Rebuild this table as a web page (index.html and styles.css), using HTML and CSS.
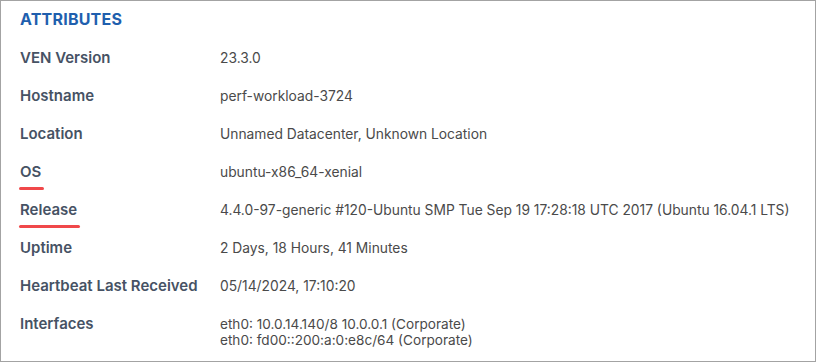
FILE: index.html
```html
<!DOCTYPE html>
<html lang="en">
<head>
    <meta charset="UTF-8" />
    <title>Workload Attributes</title>
    <link rel="stylesheet" href="styles.css">
</head>
<body>
    <section class="panel">
        <h2 class="panel-title">ATTRIBUTES</h2>
        <dl class="attrs">
            <dt>VEN Version</dt>
            <dd>23.3.0</dd>

            <dt>Hostname</dt>
            <dd>perf-workload-3724</dd>

            <dt>Location</dt>
            <dd>Unnamed Datacenter, Unknown Location</dd>

            <dt><span class="marked">OS</span></dt>
            <dd>ubuntu-x86_64-xenial</dd>

            <dt><span class="marked">Release</span></dt>
            <dd>4.4.0-97-generic #120-Ubuntu SMP Tue Sep 19 17:28:18 UTC 2017 (Ubuntu 16.04.1 LTS)</dd>

            <dt>Uptime</dt>
            <dd>2 Days, 18 Hours, 41 Minutes</dd>

            <dt>Heartbeat Last Received</dt>
            <dd>05/14/2024, 17:10:20</dd>

            <dt>Interfaces</dt>
            <dd class="list">
                <div>eth0: 10.0.14.140/8 10.0.0.1 (Corporate)</div>
                <div>eth0: fd00::200:a:0:e8c/64 (Corporate)</div>
            </dd>
        </dl>
    </section>
</body>
</html>
```

FILE: styles.css
```css
body {
    margin: 0;
    font-family: 'Inter', sans-serif;
    background: #fff;
}
.panel {
    box-sizing: border-box;
    width: 816px;
    height: 362px;
    border: 1px solid #a3a3a3;
    padding: 8px 19px 0;
}
.panel-title {
    margin: 0 0 19px;
    font-size: 16px;
    line-height: 20px;
    font-weight: 700;
    color: #1f5fae;
    letter-spacing: 0.2px;
}
.attrs {
    display: grid;
    grid-template-columns: 200px 1fr;
    row-gap: 18px;
    margin: 0;
}
.attrs dt {
    font-size: 15px;
    font-weight: 600;
    color: #465264;
    line-height: 20px;
}
.attrs dd {
    margin: 0;
    font-size: 13.8px;
    color: #4a4a4a;
    line-height: 20px;
    white-space: nowrap;
}
.attrs .list {
    font-size: 13.6px;
    line-height: 16px;
    padding-top: 2px;
}
.marked {
    position: relative;
}
.marked::after {
    content: '';
    position: absolute;
    left: -1px;
    right: -3px;
    top: 25px;
    height: 3px;
    border-radius: 2px;
    background: #f0484a;
}
```
